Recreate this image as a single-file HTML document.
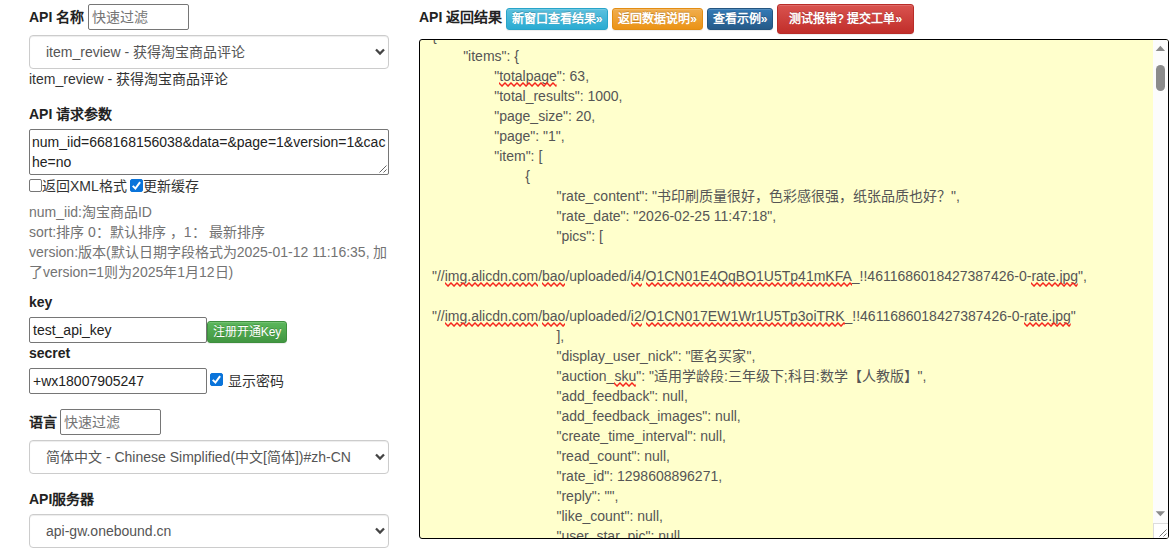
<!DOCTYPE html>
<html lang="zh-CN">
<head>
<meta charset="utf-8">
<title>API</title>
<style>
*{box-sizing:border-box;}
html,body{margin:0;padding:0;background:#fff;}
body{width:1175px;height:555px;overflow:hidden;position:relative;font-family:"Liberation Sans",sans-serif;font-size:14px;line-height:20px;color:#333;}
.abs{position:absolute;white-space:nowrap;}
.b{font-weight:bold;color:#222;}
.inp{position:absolute;border:1px solid #767676;border-radius:2px;background:#fff;font-size:14px;line-height:20px;padding:0 3px;color:#222;white-space:nowrap;}
.ph{color:#757575;}
.sel{position:absolute;left:29px;width:360px;height:34px;border:1px solid #ccc;border-radius:4px;background:#fff;box-shadow:inset 0 1px 1px rgba(0,0,0,.075);color:#555;padding:6px 0 6px 16px;white-space:nowrap;}
.sel svg{position:absolute;left:344px;top:11px;}
.help{color:#737373;}
.btn{position:absolute;text-align:center;color:#fff;font-size:12px;line-height:18px;padding:1px 0;border-radius:3px;border:1px solid;white-space:nowrap;text-shadow:0 -1px 0 rgba(0,0,0,.2);box-shadow:inset 0 1px 0 rgba(255,255,255,.15),0 1px 1px rgba(0,0,0,.075);font-weight:bold;}
.cb{position:absolute;width:13px;height:13px;border:1px solid #767676;border-radius:2px;background:#fff;}
.cb.on{background:#0a74da;border-color:#0a74da;}
.cb svg{position:absolute;left:-1px;top:-1px;}
#ta{position:absolute;left:419px;top:39px;width:750px;height:500px;border:1px solid #000;border-radius:3px;background:#ffffcc;overflow:hidden;}
#tx{position:absolute;left:12px;top:-14px;color:#555;font-size:14px;line-height:20px;white-space:pre;}
#tx div{height:20px;}
.sp{position:relative;display:inline-block;height:20px;vertical-align:top;}
.sp svg{position:absolute;left:0;top:16px;width:100%;height:6px;overflow:hidden;}
#sb{position:absolute;right:0;top:0;width:15px;height:100%;background:#fcfcfc;}
</style>
</head>
<body>
<svg width="0" height="0" style="position:absolute"><defs><pattern id="wv" x="0" y="0" width="6" height="6" patternUnits="userSpaceOnUse"><path d="M-0.5 0.5 L0 1 L3 4.1 L6 1 L6.5 0.5" fill="none" stroke="#f6261c" stroke-width="1.5" stroke-linejoin="round"/></pattern></defs></svg>
<!-- left column -->
<div class="abs b" style="left:29px;top:7px;">API 名称</div>
<div class="inp" style="left:88px;top:4px;width:101px;height:26px;padding-top:2px;"><span class="ph">快速过滤</span></div>
<div class="sel" style="top:35px;">item_review - 获得淘宝商品评论<svg width="12" height="9" viewBox="0 0 12 9"><path d="M2 2.5 L6 6.5 L10 2.5" fill="none" stroke="#444" stroke-width="2.3"/></svg></div>
<div class="abs" style="left:29px;top:69px;">item_review - 获得淘宝商品评论</div>
<div class="abs b" style="left:29px;top:104px;">API 请求参数</div>
<div class="inp" style="left:29px;top:129px;width:360px;height:46px;padding:2px 2px;white-space:normal;word-break:break-all;">num_iid=668168156038&amp;data=&amp;page=1&amp;version=1&amp;cac<br>he=no
<svg style="position:absolute;right:1px;bottom:1px" width="8" height="8" viewBox="0 0 8 8"><path d="M7.5 0.5 L0.5 7.5 M7.5 4.5 L4.5 7.5" stroke="#666" stroke-width="1" fill="none"/></svg></div>
<div class="cb" style="left:29px;top:179px;"></div>
<div class="abs" style="left:42px;top:176px;">返回XML格式</div>
<div class="cb on" style="left:130px;top:179px;"><svg width="13" height="13" viewBox="0 0 13 13"><path d="M2.7 6.9 L5.4 9.5 L10.1 3.2" fill="none" stroke="#fff" stroke-width="2"/></svg></div>
<div class="abs" style="left:143px;top:176px;">更新缓存</div>
<div class="abs help" style="left:29px;top:202px;">num_iid:淘宝商品ID</div>
<div class="abs help" style="left:29px;top:222px;">sort:排序 0：默认排序 ，1： 最新排序</div>
<div class="abs help" style="left:29px;top:242px;">version:版本(默认日期字段格式为2025-01-12 11:16:35, 加</div>
<div class="abs help" style="left:29px;top:262px;">了version=1则为2025年1月12日)</div>
<div class="abs b" style="left:29px;top:292px;">key</div>
<div class="inp" style="left:29px;top:317px;width:178px;height:26px;padding-top:2px;">test_api_key</div>
<div class="btn" style="left:207px;top:321px;width:80px;height:22px;background:linear-gradient(#5cb85c,#419641);border-color:#3e8f3e;font-weight:normal;">注册开通Key</div>
<div class="abs b" style="left:29px;top:343px;">secret</div>
<div class="inp" style="left:29px;top:368px;width:178px;height:26px;padding-top:2px;">+wx18007905247</div>
<div class="cb on" style="left:210px;top:373px;"><svg width="13" height="13" viewBox="0 0 13 13"><path d="M2.7 6.9 L5.4 9.5 L10.1 3.2" fill="none" stroke="#fff" stroke-width="2"/></svg></div>
<div class="abs" style="left:228px;top:371px;">显示密码</div>
<div class="abs b" style="left:29px;top:412px;">语言</div>
<div class="inp" style="left:60px;top:409px;width:101px;height:26px;padding-top:2px;"><span class="ph">快速过滤</span></div>
<div class="sel" style="top:440px;">简体中文 - Chinese Simplified(中文[简体])#zh-CN<svg width="12" height="9" viewBox="0 0 12 9"><path d="M2 2.5 L6 6.5 L10 2.5" fill="none" stroke="#444" stroke-width="2.3"/></svg></div>
<div class="abs b" style="left:29px;top:489px;">API服务器</div>
<div class="sel" style="top:514px;">api-gw.onebound.cn<svg width="12" height="9" viewBox="0 0 12 9"><path d="M2 2.5 L6 6.5 L10 2.5" fill="none" stroke="#444" stroke-width="2.3"/></svg></div>

<!-- right column -->
<div class="abs b" style="left:419px;top:7px;">API 返回结果</div>
<div class="btn" style="left:506px;top:8px;width:102px;height:22px;background:linear-gradient(#5bc0de,#2aabd2);border-color:#28a4c9;">新窗口查看结果»</div>
<div class="btn" style="left:612px;top:8px;width:91px;height:22px;background:linear-gradient(#f0ad4e,#eb9316);border-color:#e38d13;">返回数据说明»</div>
<div class="btn" style="left:707px;top:8px;width:66px;height:22px;background:linear-gradient(#337ab7,#265a88);border-color:#245580;">查看示例»</div>
<div class="btn" style="left:777px;top:4px;width:137px;height:30px;padding:5px 0;background:linear-gradient(#d9534f,#c12e2a);border-color:#b92c28;">测试报错? 提交工单»</div>

<div id="ta">
<div id="tx"><div>{</div><div>	"items": {</div><div>		"<span class="sp">totalpage<svg><rect width="100%" height="6" fill="url(#wv)"/></svg></span>": 63,</div><div>		"total_results": 1000,</div><div>		"page_size": 20,</div><div>		"page": "1",</div><div>		"item": [</div><div>			{</div><div>				"rate_content": "书印刷质量很好，色彩感很强，纸张品质也好？",</div><div>				"rate_date": "2026-02-25 11:47:18",</div><div>				"pics": [</div><div> </div><div>"//<span class="sp">img.alicdn.com<svg><rect width="100%" height="6" fill="url(#wv)"/></svg></span>/<span class="sp">bao<svg><rect width="100%" height="6" fill="url(#wv)"/></svg></span>/uploaded/<span class="sp">i4<svg><rect width="100%" height="6" fill="url(#wv)"/></svg></span>/<span class="sp">O1CN01E4QqBO1U5Tp41mKFA<svg><rect width="100%" height="6" fill="url(#wv)"/></svg></span>_!!4611686018427387426-0-<span class="sp">rate.jpg<svg><rect width="100%" height="6" fill="url(#wv)"/></svg></span>",</div><div> </div><div>"//<span class="sp">img.alicdn.com<svg><rect width="100%" height="6" fill="url(#wv)"/></svg></span>/<span class="sp">bao<svg><rect width="100%" height="6" fill="url(#wv)"/></svg></span>/uploaded/<span class="sp">i2<svg><rect width="100%" height="6" fill="url(#wv)"/></svg></span>/<span class="sp">O1CN017EW1Wr1U5Tp3oiTRK<svg><rect width="100%" height="6" fill="url(#wv)"/></svg></span>_!!4611686018427387426-0-<span class="sp">rate.jpg<svg><rect width="100%" height="6" fill="url(#wv)"/></svg></span>"</div><div>				],</div><div>				"display_user_nick": "匿名买家",</div><div>				"auction_<span class="sp">sku<svg><rect width="100%" height="6" fill="url(#wv)"/></svg></span>": "适用学龄段:三年级下;科目:数学【人教版】",</div><div>				"add_feedback": null,</div><div>				"add_feedback_images": null,</div><div>				"create_time_interval": null,</div><div>				"read_count": null,</div><div>				"rate_id": 1298608896271,</div><div>				"reply": "",</div><div>				"like_count": null,</div><div>				"user_star_pic": null,</div></div>
<div id="sb">
<svg width="15" height="500" viewBox="0 0 15 500" style="position:absolute;left:0;top:0">
<path d="M2.7 11 L7.4 5.8 L12.1 11 Z" fill="#8b8b8b"/>
<rect x="3" y="25" width="9" height="26" rx="4.5" fill="#8b8b8b"/>
<path d="M2.7 471.2 L12.1 471.2 L7.4 476.2 Z" fill="#8b8b8b"/>
<rect x="0.5" y="483.5" width="15" height="15" fill="#fff" stroke="#dcdcdc" stroke-width="1"/>
<path d="M6.5 496.5 L13.5 489.5 M10.5 496.5 L13.5 493.5" stroke="#777" stroke-width="1" fill="none"/>
</svg>
</div>
</div>
</body>
</html>
